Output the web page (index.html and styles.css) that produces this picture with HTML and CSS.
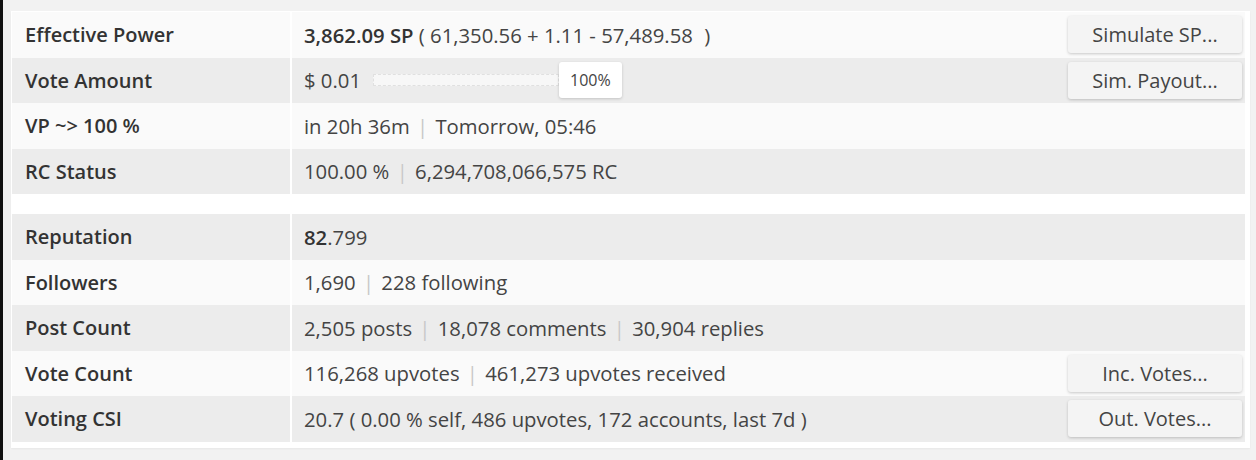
FILE: index.html
```html
<!DOCTYPE html>
<html>
<head>
<meta charset="utf-8">
<link rel="stylesheet" href="styles.css">
</head>
<body>
<div class="page">
  <div class="panel">
    <table class="stats">
      <tbody>
        <tr class="odd">
          <th>Effective Power</th>
          <td><div class="cell"><span class="val"><b>3,862.09 SP</b> ( 61,350.56 + 1.11 - 57,489.58 <span class="close">)</span></span><button class="btn">Simulate SP...</button></div></td>
        </tr>
        <tr class="even">
          <th>Vote Amount</th>
          <td><div class="cell"><span class="val vote">$ 0.01 <span class="bar"></span><span class="pct">100%</span></span><button class="btn">Sim. Payout...</button></div></td>
        </tr>
        <tr class="odd">
          <th>VP ~&gt; 100 %</th>
          <td><div class="cell"><span class="val">in 20h 36m <span class="sep">|</span> Tomorrow, 05:46</span></div></td>
        </tr>
        <tr class="even">
          <th>RC Status</th>
          <td><div class="cell"><span class="val">100.00 % <span class="sep">|</span> 6,294,708,066,575 RC</span></div></td>
        </tr>
      </tbody>
    </table>
    <div class="spacer"></div>
    <table class="stats">
      <tbody>
        <tr class="even">
          <th>Reputation</th>
          <td><div class="cell"><span class="val"><b>82</b>.799</span></div></td>
        </tr>
        <tr class="odd">
          <th>Followers</th>
          <td><div class="cell"><span class="val">1,690 <span class="sep">|</span> 228 following</span></div></td>
        </tr>
        <tr class="even">
          <th>Post Count</th>
          <td><div class="cell"><span class="val">2,505 posts <span class="sep">|</span> 18,078 comments <span class="sep">|</span> 30,904 replies</span></div></td>
        </tr>
        <tr class="odd">
          <th>Vote Count</th>
          <td><div class="cell"><span class="val">116,268 upvotes <span class="sep">|</span> 461,273 upvotes received</span><button class="btn">Inc. Votes...</button></div></td>
        </tr>
        <tr class="even">
          <th>Voting CSI</th>
          <td><div class="cell"><span class="val">20.7 ( 0.00 % self, 486 upvotes, 172 accounts, last 7d )</span><button class="btn">Out. Votes...</button></div></td>
        </tr>
      </tbody>
    </table>
  </div>
</div>
</body>
</html>
```

FILE: styles.css
```css
html, body {
  margin: 0;
  padding: 0;
}
body {
  background: #f2f2f2;
  border-left: 3px solid #111;
  min-height: 460px;
  box-sizing: border-box;
  font-family: "Open Sans", "Liberation Sans", sans-serif;
  color: #444;
}
.page {
  padding: 11px 6px 0 8px;
}
.panel {
  background: #fff;
  padding: 1px 5px 6px 1px;
  box-shadow: 0 1px 2px rgba(0,0,0,0.05);
}
.stats {
  width: 100%;
  border-collapse: collapse;
  border-spacing: 0;
  font-size: 20px;
}
.stats tr {
  height: 45.5px;
}
.stats tr.odd {
  background: #fafafa;
}
.stats tr.even {
  background: #ececec;
}
.stats th {
  width: 265px;
  text-align: left;
  font-weight: 600;
  color: #333;
  padding: 0 0 0 13px;
  border-right: 2px solid #fff;
  vertical-align: middle;
}
.stats td {
  padding: 0 3px 0 12px;
  vertical-align: middle;
}
.cell {
  display: flex;
  align-items: center;
  justify-content: space-between;
}
.val {
  font-size: 20.3px;
}
.val b {
  font-weight: 600;
  color: #333;
}
.close {
  margin-left: 6px;
}
.sep {
  color: #c8c8c8;
  margin: 0 2px;
}
.vote {
  display: flex;
  align-items: center;
}
.bar {
  display: inline-block;
  width: 184px;
  height: 10px;
  border: 1px dashed #e0e0e0;
  background: #f7f7f7;
  margin-left: 12px;
}
.pct {
  display: inline-block;
  background: #fff;
  font-size: 16px;
  line-height: 20px;
  padding: 8px 11px;
  border-radius: 3px;
  box-shadow: 0 1px 3px rgba(0,0,0,0.18);
}
.btn {
  font-family: "Open Sans", "Liberation Sans", sans-serif;
  font-size: 20px;
  color: #444;
  background: #f4f4f4;
  border: none;
  border-radius: 3px;
  box-shadow: 0 1px 3px rgba(0,0,0,0.2);
  width: 174px;
  height: 37px;
  padding: 0;
}
.spacer {
  height: 20px;
}
```
